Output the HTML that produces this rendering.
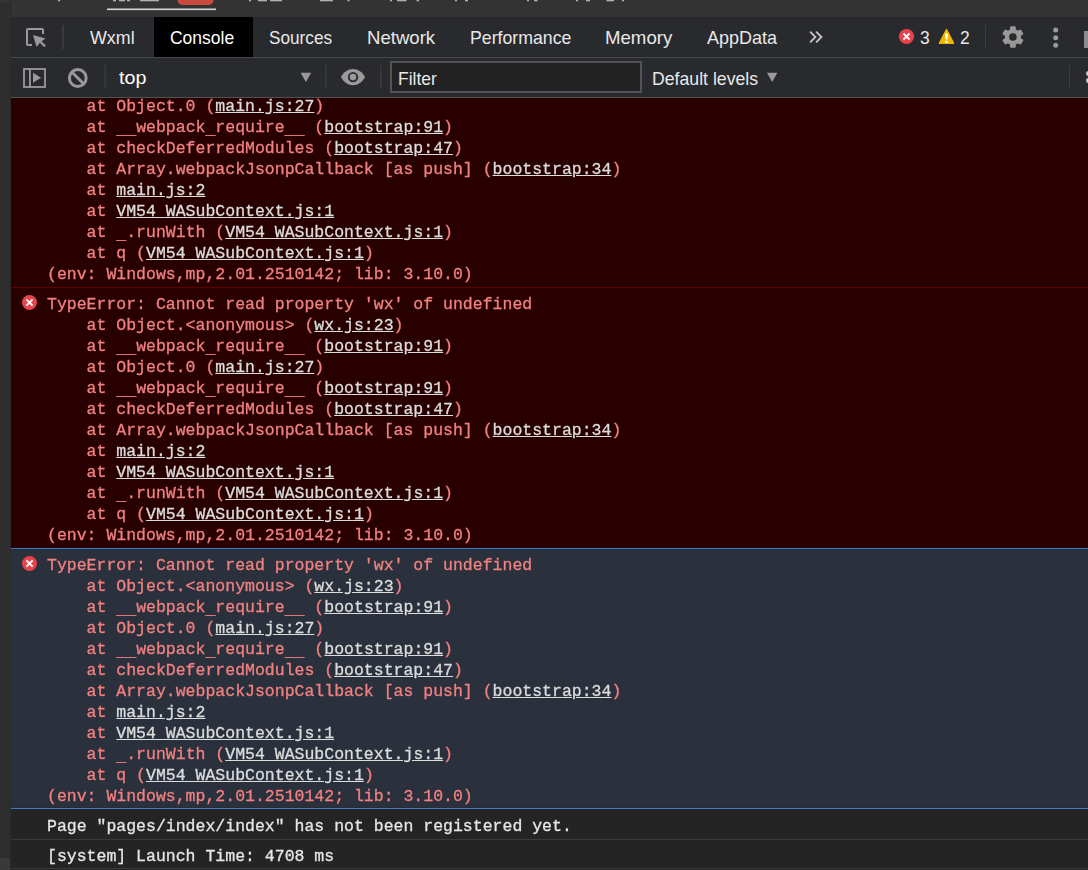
<!DOCTYPE html>
<html><head><meta charset="utf-8">
<style>
*{margin:0;padding:0;box-sizing:border-box}
html,body{width:1088px;height:870px;overflow:hidden;background:#333333;font-family:"Liberation Sans",sans-serif}
#left{position:absolute;left:0;top:0;width:11px;height:870px;background:#2e2e2e;border-right:1px solid #2a2a2a}
#topstrip{position:absolute;left:11px;top:0;width:1077px;height:17px;background:#333333}
#tabbar{position:absolute;left:11px;top:17px;width:1077px;height:41px;background:#292a2d;border-bottom:1px solid #46484b}
#toolbar{position:absolute;left:11px;top:58px;width:1077px;height:40px;background:#292a2d;border-bottom:1px solid #515353}
.abs{position:absolute}
.lbl{position:absolute;height:40px;line-height:40px;font-size:19px;color:#e8e8e8;white-space:nowrap;transform:scaleX(0.92);transform-origin:0 0}
.vsep{position:absolute;width:1px;background:#3f3f3f}
#console{position:absolute;left:11px;top:98px;width:1077px;height:772px;overflow:hidden;background:#242424;will-change:transform}
.msg{position:relative;font-family:"Liberation Mono",monospace;font-size:16.5px;line-height:21px;white-space:pre;-webkit-text-stroke:0.3px currentColor;padding:6px 0 2px 36px}
.err{background:#280000;color:#f28080;border-top:1px solid #5c0000}
.sel{background:#2a313c;border-top:1px solid #4278be;border-bottom:1px solid #4278be;box-shadow:inset 0 1px #262b33,inset 0 -1px #272c35}
.log{color:#e6e6e6;border-top:1px solid #3a3a3a}
a,.lk{color:#dcdcdc;text-decoration:underline}
.u{font-style:normal;position:relative;top:2px}
.ico{position:absolute;left:11px;top:7px;width:16px;height:16px}
</style></head><body>
<div id="left"></div><div class="abs" style="left:0;top:858px;width:10px;height:12px;background:#393939"></div><div class="abs" style="left:0;top:0;width:10px;height:2px;background:#353535"></div>
<div id="topstrip"></div>
<div id="tabbar"></div>
<div id="toolbar"></div>
<div class="abs" style="left:154px;top:17px;width:99px;height:40px;background:#000"></div>
<div class="lbl" style="left:90px;top:18px;transform:scaleX(0.94)">Wxml</div>
<div class="lbl" style="left:170px;top:18px;color:#fff">Console</div>
<div class="lbl" style="left:269px;top:18px;transform:scaleX(0.905)">Sources</div>
<div class="lbl" style="left:367px;top:18px;transform:scaleX(0.978)">Network</div>
<div class="lbl" style="left:470px;top:18px;transform:scaleX(0.932)">Performance</div>
<div class="lbl" style="left:605px;top:18px;transform:scaleX(0.98)">Memory</div>
<div class="lbl" style="left:707px;top:18px;transform:scaleX(0.947)">AppData</div>
<div class="lbl" style="left:920px;top:18px">3</div>
<div class="lbl" style="left:960px;top:18px">2</div>
<div class="lbl" style="left:119px;top:58px;color:#fff;transform:scaleX(1.035)">top</div>
<div class="abs" style="left:390px;top:61px;width:252px;height:32px;border:2px solid #525354;background:#222"></div>
<div class="lbl" style="left:398px;top:59px">Filter</div>
<div class="lbl" style="left:652px;top:59px;transform:scaleX(0.93)">Default levels</div>
<svg class="abs" style="left:0;top:0" width="1088" height="98" viewBox="0 0 1088 98">
  <g fill="none" stroke="#9a9a9a" stroke-width="2">
    <path d="M32 45H28a1 1 0 0 1-1-1V30a1 1 0 0 1 1-1h14a1 1 0 0 1 1 1v4"/>
  </g>
  <path fill="#9a9a9a" d="M33 35L45.5 38.5L41.5 41.2L45.8 45.6L44.2 47.2L39.9 42.8L36.6 47Z"/>
  <rect x="62" y="25" width="2" height="24" fill="#3a3a3a"/>
  <g fill="none" stroke="#c4c4c4" stroke-width="1.9" stroke-linecap="round"><path d="M810.6 32.2L815.4 37L810.6 41.8M816.6 32.2L821.4 37L816.6 41.8"/></g>
  <circle cx="906.5" cy="36.5" r="7.6" fill="#e8434c"/>
  <path d="M903.5 33.5l6 6M909.5 33.5l-6 6" stroke="#fff" stroke-width="1.8"/>
  <path d="M946.5 29.6L953.6 43.2H939.4Z" fill="#f2b600" stroke="#f2b600" stroke-width="1.4" stroke-linejoin="round"/>
  <path d="M945 33.5H948.1L947.4 39.6H945.7Z" fill="#fff"/><rect x="945" y="40.8" width="3.1" height="1.9" fill="#fff"/>
  <rect x="985" y="25" width="1" height="24" fill="#3c3c3c"/>
  <g fill="#989898"><circle cx="1012.90" cy="37.00" r="8.1"/><rect x="1010.00" y="26.30" width="5.8" height="21.4" rx="1.2" transform="rotate(0 1012.90 37.00)"/><rect x="1010.00" y="26.30" width="5.8" height="21.4" rx="1.2" transform="rotate(60 1012.90 37.00)"/><rect x="1010.00" y="26.30" width="5.8" height="21.4" rx="1.2" transform="rotate(120 1012.90 37.00)"/></g><circle cx="1012.90" cy="37.00" r="3.8" fill="#292a2d"/>
  <g fill="#9a9a9a"><circle cx="1055.7" cy="30.1" r="2.5"/><circle cx="1055.7" cy="37.7" r="2.5"/><circle cx="1055.7" cy="45.3" r="2.5"/></g>
  <rect x="1084" y="31" width="4" height="17" fill="#8e8e8e"/>
  <!-- row 2 -->
  <rect x="24" y="69" width="21" height="18" fill="none" stroke="#9a9a9a" stroke-width="1.8"/>
  <rect x="29" y="69" width="1.8" height="18" fill="#9a9a9a"/>
  <path d="M33 72.7L41 77.8L33 82.8Z" fill="#9a9a9a"/>
  <circle cx="77.8" cy="78" r="8.4" fill="none" stroke="#9a9a9a" stroke-width="3"/>
  <path d="M71.8 72L83.8 84" stroke="#9a9a9a" stroke-width="3"/>
  <rect x="104.5" y="65" width="1.5" height="24" fill="#3a3a3a"/>
  <path d="M300.6 72.7H311.2L305.9 82Z" fill="#9a9a9a"/>
  <rect x="325" y="65" width="1.5" height="24" fill="#3a3a3a"/>
  <path fill="#9a9a9a" d="M341 77.1C343.5 72 348 69 353 69C358 69 362.5 72 365 77.1C362.5 82.2 358 85.3 353 85.3C348 85.3 343.5 82.2 341 77.1Z"/>
  <circle cx="353" cy="77.1" r="5.2" fill="#292a2d"/><circle cx="353" cy="77.1" r="3.3" fill="#9a9a9a"/>
  <rect x="380" y="65" width="1.5" height="24" fill="#3a3a3a"/>
  <path d="M767 72.7H777.4L772.2 82Z" fill="#9a9a9a"/>
  <rect x="1069" y="65" width="1" height="24" fill="#3c3c3c"/>
  <circle cx="1088.6" cy="73.6" r="2.6" fill="#c8c8c8"/><circle cx="1088.6" cy="80.6" r="2.6" fill="#c8c8c8"/>
  <!-- top strip bits -->
  <rect x="107" y="8.5" width="109" height="1.6" fill="#d8d8d8"/>
  <path d="M177.5 0H213.5V0C213.5 3 211 5 207.5 5H183.5C180 5 177.5 3 177.5 0Z" fill="#c94a40"/>
  <g fill="#b0b0b0"><rect x="58" y="0" width="2" height="1.3"/><rect x="113" y="0" width="3" height="1.3"/><rect x="119" y="0" width="6" height="1.3"/><rect x="127" y="0" width="3" height="1.3"/><rect x="140" y="0" width="19" height="1.3"/><rect x="249" y="0" width="2" height="1.3"/><rect x="258" y="0" width="9" height="1.3"/><rect x="270" y="0" width="12" height="1.3"/><rect x="320" y="0" width="13" height="1.3"/><rect x="347.5" y="0" width="2.0" height="1.3"/><rect x="390" y="0" width="2" height="1.3"/><rect x="397" y="0" width="9.5" height="1.3"/><rect x="416.5" y="0" width="2.5" height="1.3"/><rect x="455" y="0" width="2" height="1.3"/><rect x="465" y="0" width="3" height="1.3"/><rect x="527" y="0" width="2" height="1.3"/><rect x="534" y="0" width="3.5" height="1.3"/><rect x="576" y="0" width="2" height="1.3"/><rect x="586" y="0" width="4" height="1.3"/><rect x="606.5" y="0" width="7.5" height="1.3"/><rect x="622" y="0" width="2" height="1.3"/></g>
</svg>
<div id="console">
<div class="msg err" style="margin-top:-8px;border-top:none">    at Object.0 (<span class="lk">main.js:27</span>)
    at <i class="u">__</i>webpack<i class="u">_</i>require<i class="u">__</i> (<span class="lk">bootstrap:91</span>)
    at checkDeferredModules (<span class="lk">bootstrap:47</span>)
    at Array.webpackJsonpCallback [as push] (<span class="lk">bootstrap:34</span>)
    at <span class="lk">main.js:2</span>
    at <span class="lk">VM54 WASubContext.js:1</span>
    at <i class="u">_</i>.runWith (<span class="lk">VM54 WASubContext.js:1</span>)
    at q (<span class="lk">VM54 WASubContext.js:1</span>)
(env: Windows,mp,2.01.2510142; lib: 3.10.0)</div>
<div class="msg err"><svg class="ico" width="16" height="16" viewBox="0 0 16 16"><circle cx="7.5" cy="7.5" r="7.5" fill="#e8434c"/><path d="M4.4 4.4L10.6 10.6M10.6 4.4L4.4 10.6" stroke="#fff" stroke-width="1.9"/></svg>TypeError: Cannot read property 'wx' of undefined
    at Object.&lt;anonymous&gt; (<span class="lk">wx.js:23</span>)
    at <i class="u">__</i>webpack<i class="u">_</i>require<i class="u">__</i> (<span class="lk">bootstrap:91</span>)
    at Object.0 (<span class="lk">main.js:27</span>)
    at <i class="u">__</i>webpack<i class="u">_</i>require<i class="u">__</i> (<span class="lk">bootstrap:91</span>)
    at checkDeferredModules (<span class="lk">bootstrap:47</span>)
    at Array.webpackJsonpCallback [as push] (<span class="lk">bootstrap:34</span>)
    at <span class="lk">main.js:2</span>
    at <span class="lk">VM54 WASubContext.js:1</span>
    at <i class="u">_</i>.runWith (<span class="lk">VM54 WASubContext.js:1</span>)
    at q (<span class="lk">VM54 WASubContext.js:1</span>)
(env: Windows,mp,2.01.2510142; lib: 3.10.0)</div>
<div class="msg sel" style="color:#f28080;padding-bottom:1px"><svg class="ico" width="16" height="16" viewBox="0 0 16 16"><circle cx="7.5" cy="7.5" r="7.5" fill="#e8434c"/><path d="M4.4 4.4L10.6 10.6M10.6 4.4L4.4 10.6" stroke="#fff" stroke-width="1.9"/></svg>TypeError: Cannot read property 'wx' of undefined
    at Object.&lt;anonymous&gt; (<span class="lk">wx.js:23</span>)
    at <i class="u">__</i>webpack<i class="u">_</i>require<i class="u">__</i> (<span class="lk">bootstrap:91</span>)
    at Object.0 (<span class="lk">main.js:27</span>)
    at <i class="u">__</i>webpack<i class="u">_</i>require<i class="u">__</i> (<span class="lk">bootstrap:91</span>)
    at checkDeferredModules (<span class="lk">bootstrap:47</span>)
    at Array.webpackJsonpCallback [as push] (<span class="lk">bootstrap:34</span>)
    at <span class="lk">main.js:2</span>
    at <span class="lk">VM54 WASubContext.js:1</span>
    at <i class="u">_</i>.runWith (<span class="lk">VM54 WASubContext.js:1</span>)
    at q (<span class="lk">VM54 WASubContext.js:1</span>)
(env: Windows,mp,2.01.2510142; lib: 3.10.0)</div>
<div class="msg log" style="border-top:none;padding-top:7px;height:30px">Page "pages/index/index" has not been registered yet.</div>
<div class="msg log" style="height:29px">[system] Launch Time: 4708 ms</div>
<div class="msg log" style="height:10px"></div>
</div>
</body></html>
